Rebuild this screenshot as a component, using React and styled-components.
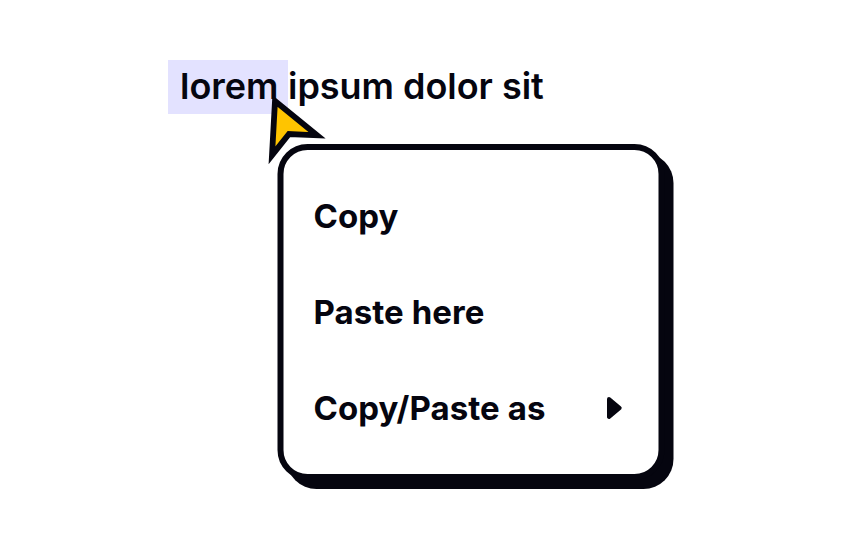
import React from "react";
import styled, { createGlobalStyle } from "styled-components";

const Global = createGlobalStyle`
  body { margin: 0; background: #fff; }
  * { box-sizing: border-box; }
`;
const Canvas = styled.main`
  width: 864px;
  height: 540px;
  padding: 60px 0 0 168px;
  overflow: hidden;
  color: #05050f;
  font-family: Inter, sans-serif;
`;
const Sentence = styled.p`
  position: relative;
  display: flex;
  margin: 0;
  height: 54px;
  font-size: 36px;
  font-weight: 600;
  line-height: 52px;
  letter-spacing: -0.03px;
  white-space: pre;
`;
const Selection = styled.span`
  width: 120px;
  padding-left: 12px;
  background: #e3e2ff;
`;
const Pointer = styled.svg`
  position: absolute;
  left: 92px;
  top: 30px;
`;
const Menu = styled.ul`
  width: 387px;
  height: 336px;
  margin: 30px 0 0 110px;
  padding: 18px 30px;
  list-style: none;
  background: #fff;
  border: 6px solid #05050f;
  border-radius: 30px;
  box-shadow: 9px 9px 0 #05050f;
  transform: translateX(-0.5px);
`;
const Item = styled.li`
  display: flex;
  align-items: center;
  justify-content: space-between;
  height: 96px;
  font-size: 33px;
  font-weight: 700;
  letter-spacing: 0.06px;
  white-space: nowrap;
`;
const Arrow = styled.svg`
  margin-right: 6.5px;
`;

export default function App() {
  return (
    <Canvas>
      <Global />
      <Sentence>
        <Selection>lorem</Selection>
        <span>ipsum dolor sit</span>
        <Pointer width="70" height="80" viewBox="260 90 70 80">
          <path d="M275 101 L317 135.3 L289 134 L272 155.3 Z" fill="#ffc400" stroke="#05050f" strokeWidth="5.8" />
        </Pointer>
      </Sentence>
      <Menu>
        <Item>Copy</Item>
        <Item>Paste here</Item>
        <Item>
          Copy/Paste as
          <Arrow width="16" height="24" viewBox="0 0 16 24">
            <path d="M2.5 3 L13.2 12 L2.5 21 Z" fill="#05050f" stroke="#05050f" strokeWidth="4" strokeLinejoin="round" />
          </Arrow>
        </Item>
      </Menu>
    </Canvas>
  );
}
